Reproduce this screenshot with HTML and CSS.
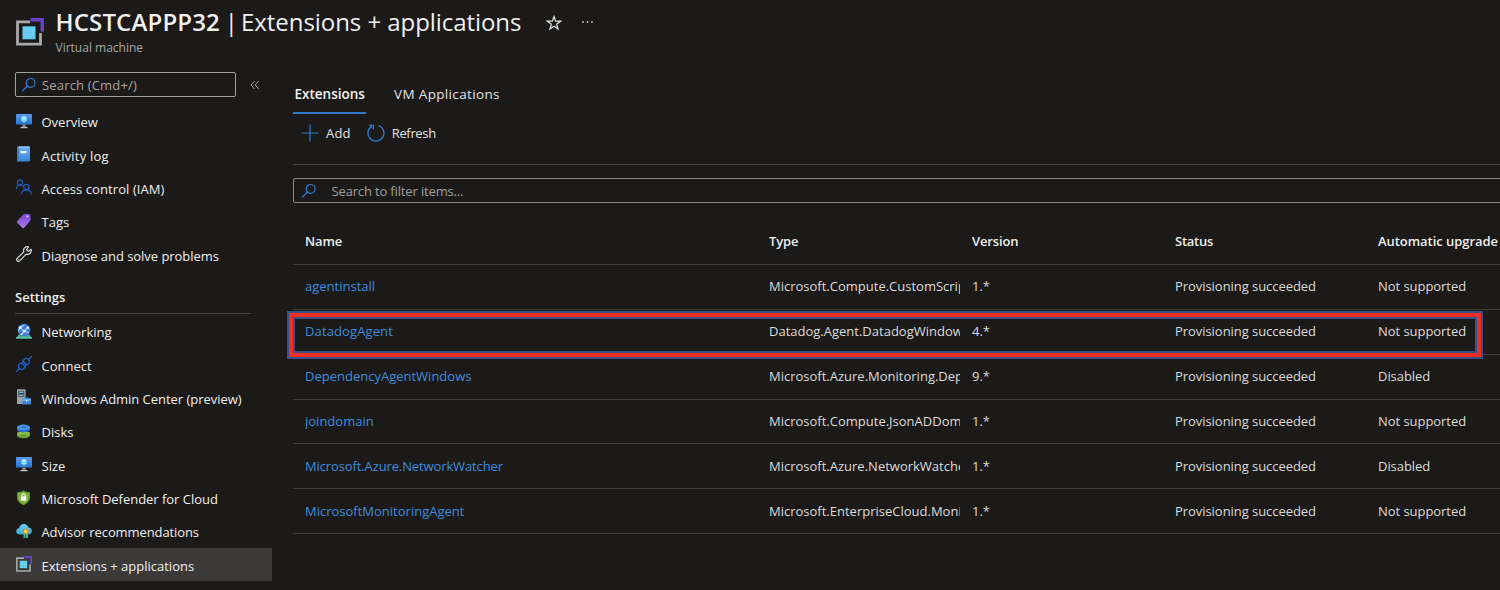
FILE: index.html
```
<!DOCTYPE html>
<html lang="en">
<head>
<meta charset="utf-8">
<title>HCSTCAPPP32 | Extensions + applications</title>
<link rel="stylesheet" href="styles.css">
</head>
<body>
<svg class="defs" aria-hidden="true">
  <defs>
    <linearGradient id="gBlue" x1="0" y1="0" x2="0" y2="1"><stop offset="0" stop-color="#5c98ea"/><stop offset="1" stop-color="#2876d4"/></linearGradient>
    <linearGradient id="gBook" x1="0" y1="0" x2="0" y2="1"><stop offset="0" stop-color="#66b1ec"/><stop offset="1" stop-color="#3b86d4"/></linearGradient>
    <linearGradient id="gTag" x1="0" y1="0" x2="0" y2="1"><stop offset="0" stop-color="#7544d0"/><stop offset="1" stop-color="#a87de8"/></linearGradient>
    <linearGradient id="gCloud" x1="0" y1="0" x2="0" y2="1"><stop offset="0" stop-color="#6cd3f2"/><stop offset="1" stop-color="#38a8dc"/></linearGradient>
    <symbol id="monitor" viewBox="0 0 16 16">
      <rect x="0" y="1" width="16" height="10.6" rx=".5" fill="url(#gBlue)"/>
      <path d="M6.6 11.6h2.8l.5 2.8H6.100z" fill="#8c8c8c"/><rect x="4.300" y="14" width="7.400" height="1.300" rx=".4" fill="#b9b9b9"/>
      <path d="M8 3.100l2.700 1.500v3.200L8 9.400 5.300 7.800V4.600z" fill="#7fdcf6"/><path d="M8 3.100l2.700 1.500L8 6.200 5.300 4.600z" fill="#b5eefc"/>
    </symbol>
    <symbol id="blocks" viewBox="0 0 28 28">
      <path d="M14 3.800H1.500V26.200H24.500V15" fill="none" stroke="#a9a9a9" stroke-width="2.800"/>
      <path d="M14.500 0H28V13.700H24.600V3.400H14.500z" fill="#6a3fc8"/>
      <rect x="6.500" y="8.300" width="13" height="13" fill="#66cdee"/>
    </symbol>
    <symbol id="search" viewBox="0 0 16 16"><circle cx="9.600" cy="5.900" r="4.400" fill="none" stroke="#2f7bd0" stroke-width="1.200"/><path d="M6.400 9L1.200 14.300" stroke="#2f7bd0" stroke-width="1.300" fill="none"/></symbol>
  </defs>
</svg>

<header class="page-head">
  <svg class="head-icon"><use href="#blocks"/></svg>
  <div class="head-text">
    <h1 class="title"><span class="title-name">HCSTCAPPP32</span><span class="title-bar"> | </span><span class="title-page">Extensions + applications</span>
      <svg class="star" viewBox="0 0 16 16"><path d="M8 1.500l1.600 4.700h5L10.600 9.200l1.500 4.900L8 11.200l-4.100 2.900 1.500-4.900-4-3h5z" fill="none" stroke="#e4e4e4" stroke-width="1.200"/></svg>
      <svg class="dots" viewBox="0 0 14 4"><circle cx="2" cy="2" r=".9"/><circle cx="6.500" cy="2" r=".9"/><circle cx="11" cy="2" r=".9"/></svg>
    </h1>
    <p class="subtitle">Virtual machine</p>
  </div>
</header>

<div class="body">
  <aside class="side">
    <div class="side-top">
      <div class="side-search"><svg class="ic-search"><use href="#search"/></svg><span>Search (Cmd+/)</span></div>
      <svg class="collapse" viewBox="0 0 10 10"><path d="M4.600 1L1 5l3.600 4M8.700 1L5.100 5l3.600 4" fill="none" stroke="#a2a2a2" stroke-width="1"/></svg>
    </div>
    <nav class="menu">
      <a class="item"><svg class="ic"><use href="#monitor"/></svg><span>Overview</span></a>
      <a class="item"><svg class="ic" viewBox="0 0 16 16"><rect x="1" y=".6" width="13" height="14.800" rx="1" fill="url(#gBook)"/><rect x="1" y=".6" width="1.800" height="14.800" rx=".8" fill="#3879c4"/><path d="M2.500 1h11" stroke="#a5d5f7" stroke-width="1"/><rect x="4.500" y="5" width="6" height="2.200" rx=".4" fill="#f3f9fe"/></svg><span class="w-log">Activity log</span></a>
      <a class="item"><svg class="ic" viewBox="0 0 16 16"><g fill="none" stroke="#245dc4" stroke-width="1.200"><circle cx="4" cy="3.400" r="2.600"/><path d="M.5 10C.6 7.500 2 6 4 6c1 0 1.900.3 2.500 1"/><circle cx="10.300" cy="8" r="2.700"/><path d="M5.400 15.500c.3-3 2-4.700 4.900-4.700s4.800 1.700 5.100 4.700"/></g></svg><span class="w-iam">Access control (IAM)</span></a>
      <a class="item"><svg class="ic" viewBox="0 0 16 16"><path d="M1.100 8.300L7.400 1.300Q8 .7 9 .7l4.400.2q1 .1 1 1.100l.2 4.500q0 .8-.6 1.400L7.900 15q-.7.700-1.400 0L1.200 9.700q-.7-.7-.1-1.400z" fill="url(#gTag)"/><circle cx="11.400" cy="3.300" r="1.100" fill="#e3d3fb"/></svg><span>Tags</span></a>
      <a class="item"><svg class="ic" viewBox="0 0 16 16"><path d="M15 3.300l-2.600 2.100-1.900-1.700L12.600 1C10.300.1 7.500 1.500 7.600 4.500c0 .6.1 1 .2 1.400L1.200 12.400c-.8.8-.7 1.800 0 2.500s1.800.6 2.500-.1L10.200 8.200c3.300 1 5.800-1.800 4.800-4.900z" fill="none" stroke="#dedede" stroke-width="1.200" stroke-linejoin="round"/><circle cx="2.900" cy="13.200" r=".5" fill="#dedede"/></svg><span class="w-diag">Diagnose and solve problems</span></a>
    </nav>
    <h2 class="group">Settings</h2>
    <nav class="menu menu-settings">
      <a class="item"><svg class="ic" viewBox="0 0 16 16"><path d="M2.500 11.500h11l2.500 3.900H0z" fill="#4ba78e"/><path d="M0 14.200h16v1.300H0z" fill="#67c8ad"/><circle cx="8" cy="7" r="6.300" fill="#3a7fd9"/><path d="M4 4.500l4 3.500 4.500-3.500M8 8l-2.500 4M8 8l5 2M4 4.500L2.500 8.500M4 4.500L8.500 2" stroke="#d6eafc" fill="none" stroke-width=".9"/><g fill="#f0f8ff"><circle cx="4.300" cy="4.700" r="1.400"/><circle cx="8.200" cy="8" r="1.500"/><circle cx="11.800" cy="4.800" r="1.200"/><circle cx="5.500" cy="11.300" r="1"/></g></svg><span>Networking</span></a>
      <a class="item"><svg class="ic" viewBox="0 0 16 16"><g fill="none" stroke="#2560cf" stroke-width="1.200" stroke-linecap="round"><path d="M.6 15.400L3.500 12.500M12.500 3.500L15.400.6M5.800 7.200l3 3M7.400 5.400l3.200 3.200"/><path d="M5.100 6.500L3.400 8.200c-1.300 1.400-1.300 3 0 4.300s3 1.300 4.300 0l1.800-1.700zM6.600 5.100l1.700-1.700c1.300-1.300 3-1.200 4.200.1s1.300 2.900 0 4.200l-1.600 1.700z"/></g></svg><span>Connect</span></a>
      <a class="item"><svg class="ic" viewBox="0 0 16 16"><rect x="1" y=".3" width="8.600" height="14.700" rx=".6" fill="#a0a0a0"/><rect x="2.400" y="1.900" width="5.800" height="5.800" fill="#24435e"/><path d="M3 3.200h4.500M3 6.200h4.500" stroke="#b9dff6" stroke-width="1"/><path d="M3 3.200h1M3 6.200h1" stroke="#43aef0" stroke-width="1.200"/><path d="M8.700 9.600V8.500h3.200v1.100" fill="none" stroke="#205ba8"/><rect x="6.200" y="9.500" width="8.800" height="6" rx=".5" fill="#3b83dc"/><path d="M6.200 9.500h8.800v2.500H6.200z" fill="#68abf0"/><rect x="9.900" y="11.200" width="1.400" height="1.500" fill="#eaf4ff"/></svg><span class="w-wac">Windows Admin Center (preview)</span></a>
      <a class="item"><svg class="ic" viewBox="0 0 16 16"><path d="M1 10.300h13v2.200c0 1.700-3 2.700-6.500 2.700S1 14.200 1 12.500z" fill="#6ba333"/><ellipse cx="7.500" cy="10.500" rx="6.500" ry="2.600" fill="#87bf45"/><path d="M1 4.300h13v2.200c0 1.700-3 2.700-6.500 2.700S1 8.200 1 6.500z" fill="#2c6dcb"/><ellipse cx="7.500" cy="4.300" rx="6.500" ry="2.700" fill="#4e94e6"/><path d="M5 4.200h5" stroke="#245fae" stroke-width="1"/><path d="M5 12h5" stroke="#466f1c" stroke-width=".8"/></svg><span>Disks</span></a>
      <a class="item"><svg class="ic"><use href="#monitor"/></svg><span>Size</span></a>
      <a class="item"><svg class="ic" viewBox="0 0 16 16"><path d="M7.500.3C9.600 2 11.500 2.100 14 2.200v5.300c0 3.900-3.500 6.400-6.500 8-3-1.600-6.500-4.100-6.500-8V2.200C3.500 2.100 5.400 2 7.500.3z" fill="#5d9527"/><path d="M7.500 1.500c1.800 1.300 3.300 1.600 5.400 1.700v4.300c0 3.200-2.800 5.300-5.400 6.700-2.600-1.400-5.400-3.500-5.400-6.700V3.200c2.100-.1 3.600-.4 5.400-1.700z" fill="#78b139"/><path d="M5.800 7V5.500a1.700 1.700 0 013.400 0V7" fill="none" stroke="#fff" stroke-width="1.100"/><rect x="4.700" y="6.500" width="5.600" height="4.300" rx=".5" fill="#fff"/></svg><span class="w-def">Microsoft Defender for Cloud</span></a>
      <a class="item"><svg class="ic" viewBox="0 0 16 16"><path d="M3.700 11.500C1.500 11.500.2 10.200.2 8.300c0-1.700 1.200-2.900 2.900-3.100C3.500 2.700 5.300 1 7.800 1c2.200 0 4 1.300 4.600 3.400 2 .2 3.400 1.500 3.400 3.500s-1.500 3.600-3.600 3.600z" fill="url(#gCloud)"/><path d="M7.800 10h1.700v5.400l-1-.8-1.200.8zM10.100 10h1.700l.3 5.400-1.100-.8-1.100.8z" fill="#42b89b"/><circle cx="9.700" cy="8.300" r="2.900" fill="#c88a20"/><circle cx="9.700" cy="8.300" r="1.900" fill="#ffd45a"/></svg><span class="w-adv">Advisor recommendations</span></a>
      <a class="item selected"><svg class="ic"><use href="#blocks"/></svg><span>Extensions + applications</span></a>
    </nav>
  </aside>

  <main class="main">
    <div class="tabs"><a class="tab active">Extensions</a><a class="tab">VM Applications</a></div>
    <div class="toolbar">
      <a class="cmd"><svg class="ic-add" viewBox="0 0 18 18"><path d="M9 .5v17M.5 9h17" stroke="#2f7bd0" stroke-width="1.200"/></svg><span class="w-add">Add</span></a>
      <a class="cmd"><svg class="ic-refresh" viewBox="0 0 18 18"><path d="M11.500 1.500A8 8 0 1 1 5 2.100" fill="none" stroke="#2f7bd0" stroke-width="1.300"/><path d="M2.300 1.400H6.300V5.300" fill="none" stroke="#2f7bd0" stroke-width="1.300"/></svg><span class="w-refresh">Refresh</span></a>
    </div>
    <div class="filter"><svg class="ic-search"><use href="#search"/></svg><span>Search to filter items...</span></div>
    <div class="table">
      <div class="row head"><span>Name</span><span>Type</span><span>Version</span><span class="w-status">Status</span><span>Automatic upgrade</span></div>
      <div class="row"><a>agentinstall</a><span>Microsoft.Compute.CustomScrip</span><span>1.*</span><span>Provisioning succeeded</span><span>Not supported</span></div>
      <div class="row marked"><a class="w-dd">DatadogAgent</a><span>Datadog.Agent.DatadogWindow</span><span>4.*</span><span>Provisioning succeeded</span><span>Not supported</span></div>
      <div class="row"><a>DependencyAgentWindows</a><span>Microsoft.Azure.Monitoring.Dep</span><span>9.*</span><span>Provisioning succeeded</span><span>Disabled</span></div>
      <div class="row"><a>joindomain</a><span>Microsoft.Compute.JsonADDom</span><span>1.*</span><span>Provisioning succeeded</span><span>Not supported</span></div>
      <div class="row"><a class="w-nw">Microsoft.Azure.NetworkWatcher</a><span>Microsoft.Azure.NetworkWatche</span><span>1.*</span><span>Provisioning succeeded</span><span>Disabled</span></div>
      <div class="row"><a>MicrosoftMonitoringAgent</a><span>Microsoft.EnterpriseCloud.Monit</span><span>1.*</span><span>Provisioning succeeded</span><span>Not supported</span></div>
    </div>
  </main>
</div>
</body>
</html>
```
FILE: styles.css
```
* { box-sizing: border-box; }
html, body { height: 100%; }
body {
  margin: 0;
  overflow: hidden;
  background: #1b1a19;
  color: #f0efee;
  font: 13px/18px "Open Sans", "Noto Sans", sans-serif;
}
svg { display: block; flex: none; }
.defs { position: absolute; width: 0; height: 0; }

.page-head { display: flex; height: 72px; padding-left: 16px; }
.head-icon { width: 28px; height: 28px; margin-top: 17.500px; }
.head-text { padding-left: 11.500px; }
.title {
  display: flex;
  align-items: center;
  height: 38px;
  margin: 3px 0 0;
  font-size: 24px;
  line-height: 38px;
  font-weight: 400;
  white-space: pre;
}
.title-name { font-weight: 600; letter-spacing: .15px; }
.title-bar { letter-spacing: -1.500px; }
.title-page { letter-spacing: -.06px; }
.star { width: 16px; height: 16px; margin: 2px 0 0 25px; }
.dots { width: 14px; height: 4px; margin: 0 0 0 19px; fill: #c4c4c4; }
.subtitle { margin: -2px 0 0; font-size: 12px; line-height: 18px; color: #a6a5a4; }

.body { display: flex; }
.side { width: 272px; flex: none; }
.side-top { display: flex; align-items: center; padding-left: 15px; height: 25px; }
.side-search {
  display: flex;
  align-items: center;
  width: 221px;
  height: 25px;
  padding-left: 5px;
  border: 1px solid #a3a2a1;
  border-radius: 2px;
  color: #a6a5a4;
  letter-spacing: .17px;
}
.side-search span { padding-left: 5px; }
.ic-search { width: 16px; height: 16px; }
.collapse { width: 10px; height: 10px; margin-left: 14px; }

.menu { display: flex; flex-direction: column; padding-top: 7px; }
.item { display: flex; align-items: center; height: 33.4px; padding-left: 15.500px; white-space: nowrap; }
.item span { padding: 3px 0 0 10px; }
.ic { width: 16px; height: 16px; }
.item .w-log { letter-spacing: .2px; }
.item .w-iam { letter-spacing: .08px; }
.item .w-diag { letter-spacing: -.04px; }
.item .w-adv { letter-spacing: -.1px; }
.item .w-wac, .item .w-def { letter-spacing: -.03px; }
.group {
  width: 236px;
  height: 43px;
  margin: 0 0 0 15px;
  padding-top: 17px;
  border-bottom: 1px solid #484746;
  font-size: 13px;
  line-height: 18px;
  font-weight: 600;
}
.menu-settings { padding-top: 0; }
.selected { background: #3b3a39; }

.main { flex: none; width: 1240px; padding-left: 21px; }
.tabs { display: flex; height: 42px; gap: 27px; font-size: 13.500px; }
.tab { height: 42px; padding: 13px 1px 0; border-bottom: 2px solid transparent; letter-spacing: .35px; color: #e4e3e2; }
.tab.active { width: 73px; padding-left: 1.500px; border-color: #2f78cc; font-weight: 600; letter-spacing: 0; color: #f4f3f2; }
.toolbar { display: flex; gap: 16px; height: 51px; padding: 10px 0 0 8px; border-bottom: 1px solid #444342; }
.cmd { display: flex; height: 18px; align-items: center; color: #e4e3e2; }
.cmd span { padding-left: 7px; }
.ic-add, .ic-refresh { width: 18px; height: 18px; }
.cmd .w-add { letter-spacing: .2px; }
.cmd .w-refresh { letter-spacing: -.35px; }
.filter {
  display: flex;
  align-items: center;
  height: 25px;
  margin-top: 13px;
  padding-left: 7px;
  border: 1px solid #8a8988;
  border-radius: 2px;
  color: #a09f9e;
  letter-spacing: -.15px;
}
.filter span { padding-left: 14.500px; }

.table { padding-top: 17px; }
.row {
  display: grid;
  grid-template-columns: 464px 203px 203px 203px 1fr;
  align-items: center;
  height: 44.900px;
  border-bottom: 1px solid #3e3d3c;
  padding: 0 0 1.500px 12px;
  color: #dddcdb;
}
.row > * { margin-right: 12px; overflow: hidden; white-space: nowrap; }
.row span:nth-child(n+4) { letter-spacing: -.05px; }
.row a { color: #3f8cdc; }
.row.head { font-weight: 600; color: #efeeed; letter-spacing: -.12px; }
.row.head .w-status { letter-spacing: -.25px; }
.row .w-dd { letter-spacing: .12px; }
.row .w-nw { letter-spacing: -.12px; }
.marked { position: relative; }
.marked::after {
  content: "";
  box-sizing: border-box;
  position: absolute;
  left: -6px;
  top: 1px;
  width: 1196px;
  height: 48px;
  border: 2px solid #35508a;
  box-shadow: inset 0 0 0 4px #ee2e22, inset 0 0 0 6px #35508a;
}
```
